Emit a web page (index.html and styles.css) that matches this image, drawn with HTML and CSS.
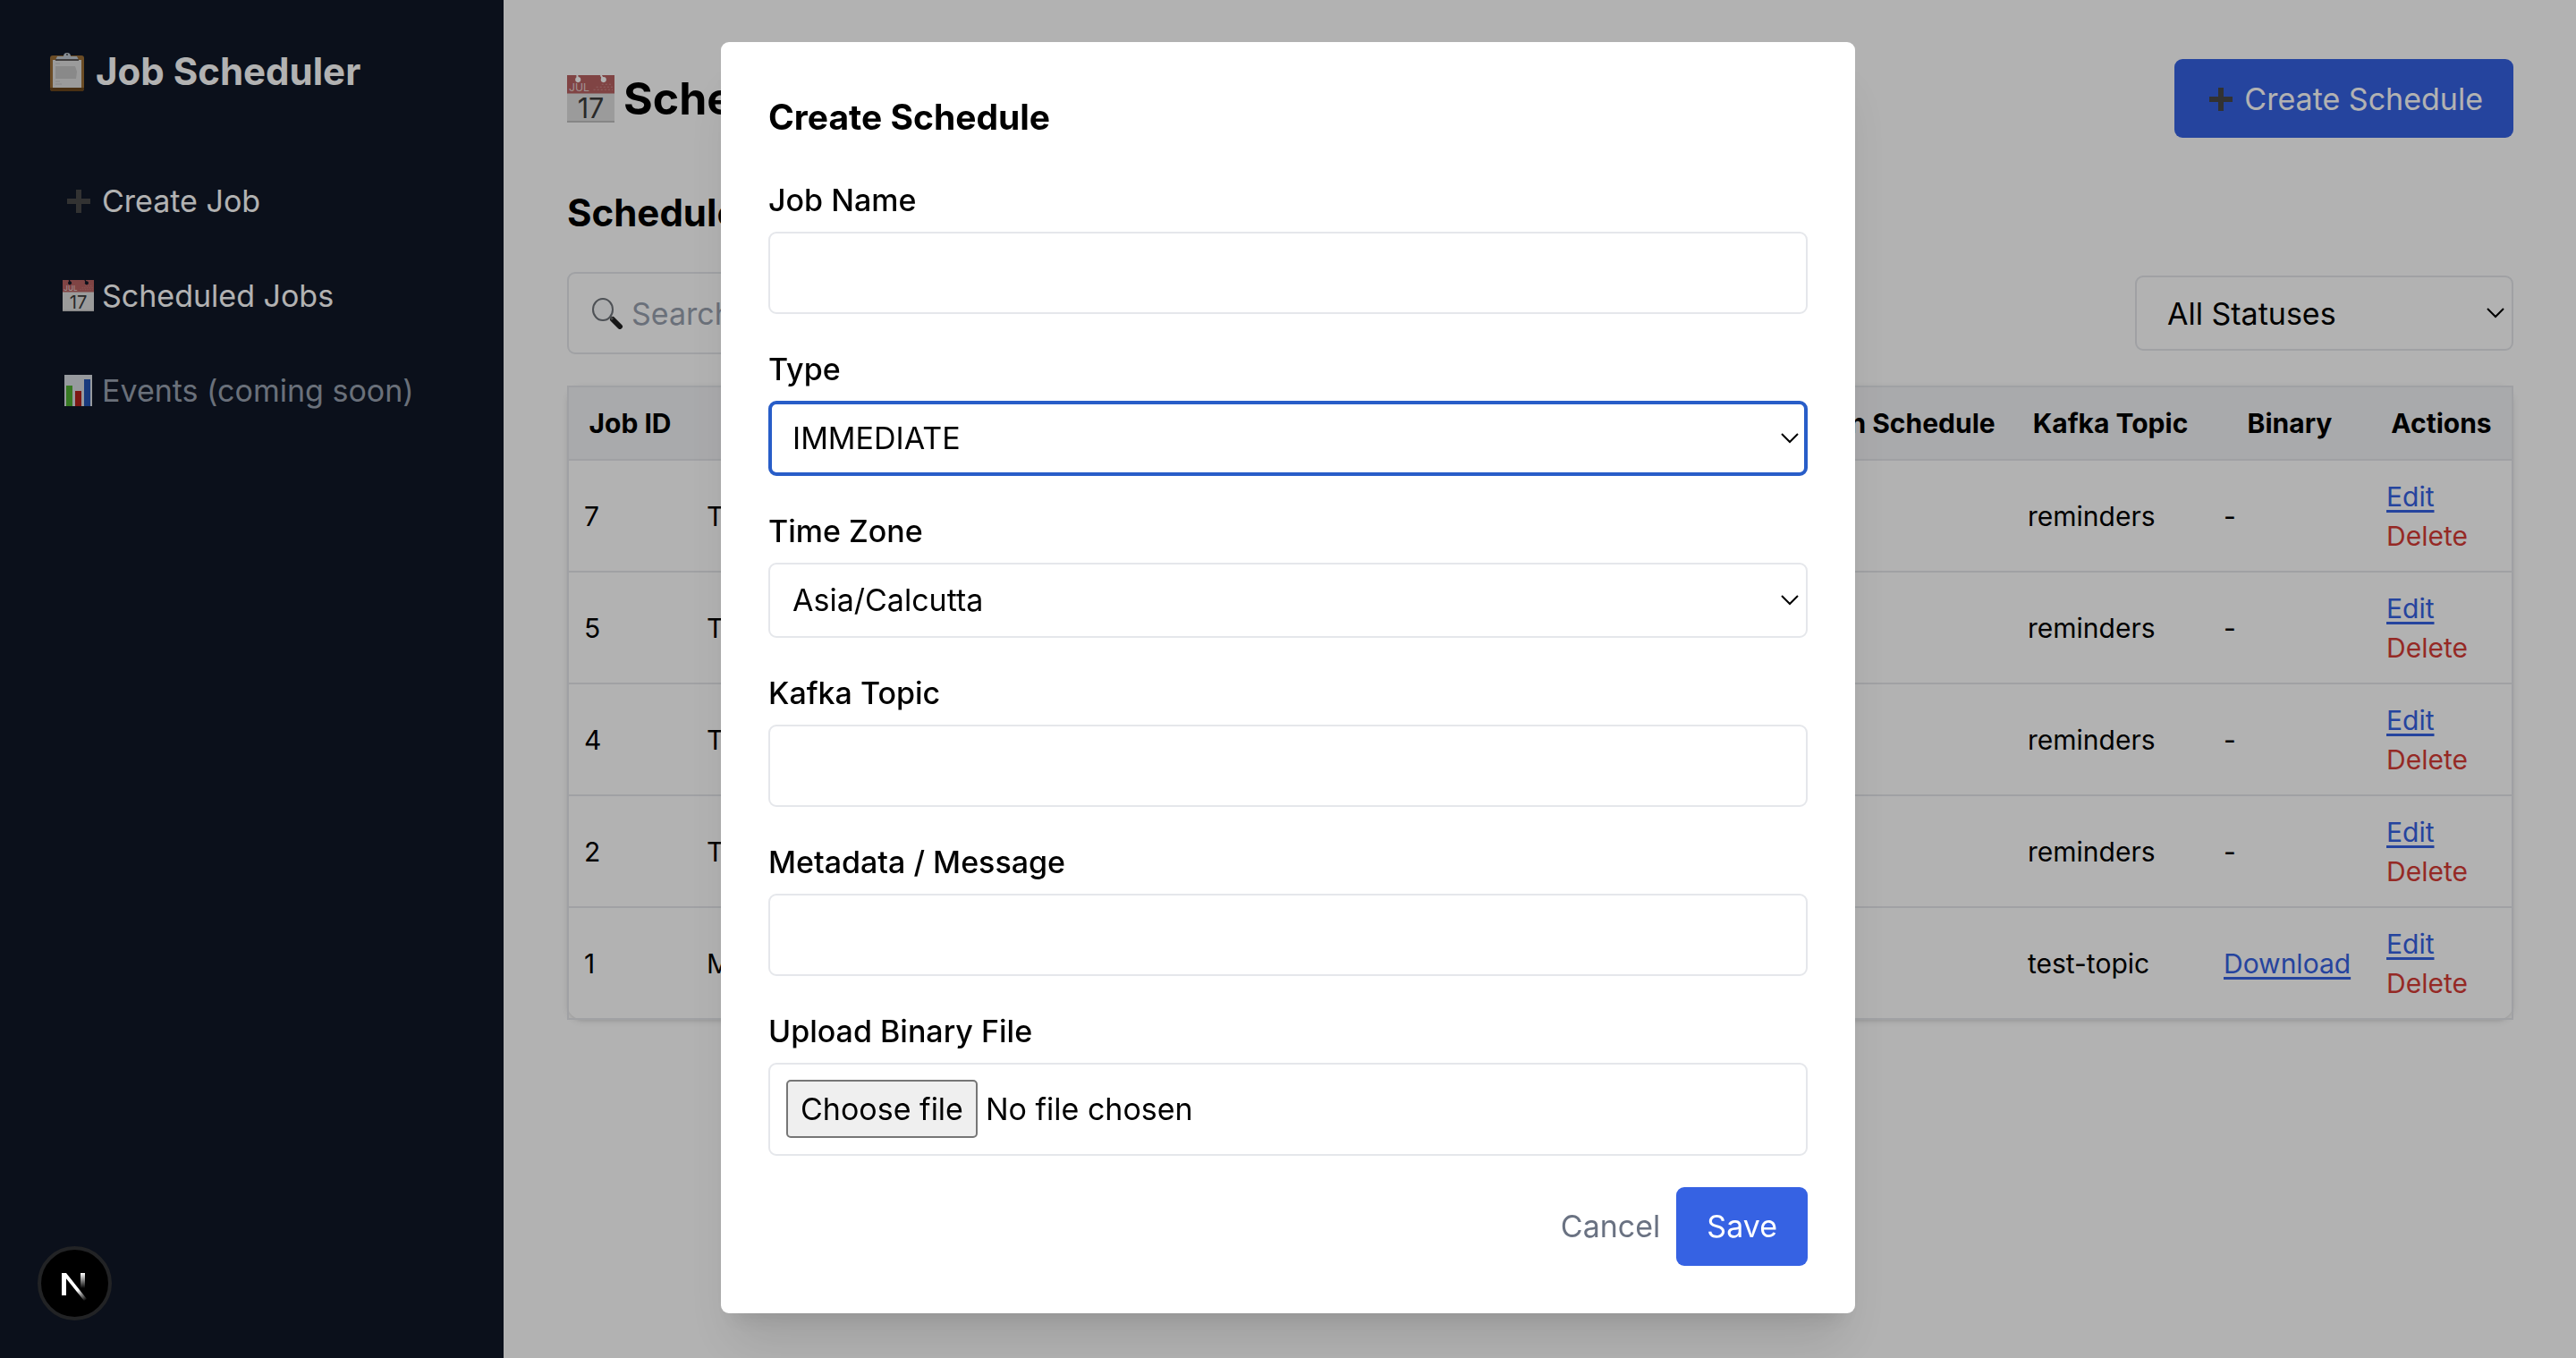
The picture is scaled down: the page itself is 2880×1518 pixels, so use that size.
FILE: index.html
```html
<!DOCTYPE html>
<html lang="en">
<head>
<meta charset="utf-8">
<title>Job Scheduler</title>
<link rel="stylesheet" href="styles.css">
</head>
<body>
<svg class="defs" aria-hidden="true">
  <symbol id="plus" viewBox="0 0 35 35">
    <path d="M18 5v26M5 18h26" stroke="#484848" stroke-width="6" fill="none"/>
  </symbol>
  <symbol id="chevron" viewBox="0 0 20 12">
    <path d="M1 1l9 9 9-9" fill="none" stroke="currentColor" stroke-width="2"/>
  </symbol>
</svg>

<div class="app">
  <aside class="sidebar">
    <h2 class="brand">
      <svg class="brand-icon" viewBox="0 0 44 44" aria-hidden="true">
        <rect x="3" y="4" width="38" height="40" rx="3" fill="#9a6d35"/>
        <path d="M3 40h38v1a3 3 0 0 1-3 3H6a3 3 0 0 1-3-3z" fill="#69451c"/>
        <path d="M6 9h32v31H6z" fill="#dedede"/>
        <path d="M9 16h22l2 6-1 8H9z" fill="#c4c4c4"/>
        <path d="M9 13h5M9 33h5M9 36h7" stroke="#c4c4c4"/>
        <path d="M9 9l2-4h7a4 4 0 1 1 8 0h7l2 4z" fill="#c2cad4"/>
        <path d="M9 9h26" stroke="#5e5a5a" stroke-width="2"/>
        <circle cx="22" cy="3" r="1" fill="#444"/>
      </svg>
      Job Scheduler
    </h2>
    <nav class="nav">
      <a class="nav-item" href="#create"><svg class="icon"><use href="#plus"/></svg>Create Job</a>
      <a class="nav-item" href="#jobs">
        <svg class="icon calendar" viewBox="0 0 52 52" aria-hidden="true">
          <path d="M0 0h52v52H0z" fill="#dedede"/>
          <path d="M0 0h52v20H0z" fill="#b86262"/>
          <circle class="hole" cx="12" cy="5" r="3"/>
          <circle class="hole" cx="40" cy="5" r="3"/>
          <path class="ring" d="M11 0l1 5M37 0l3 5"/>
          <text x="2" y="18" font-size="12" fill="#e6d4d4">JUL</text>
          <path d="M29 16h21M32 13h18M38 10h12" stroke="#cc8c8c" stroke-dasharray="2 2"/>
          <text x="26" y="47" font-size="30" text-anchor="middle" fill="#3c3c3c">17</text>
          <path d="M0 51h52" stroke="#c0c0c0" stroke-width="2"/>
        </svg>
        Scheduled Jobs
      </a>
      <span class="nav-item nav-item-disabled">
        <svg class="icon" viewBox="0 0 35 35" aria-hidden="true">
          <path d="M2 0h31v35H2z" fill="#d8dde2"/>
          <path d="M4 12h7v23H4z" fill="#4fae32"/>
          <path d="M14 18h7v17h-7z" fill="#b3221c"/>
          <path d="M24 5h7v30h-7z" fill="#2453b4"/>
        </svg>
        Events (coming soon)
      </span>
    </nav>
  </aside>

  <main class="main">
    <header class="page-header">
      <h1 class="page-title">
        <svg class="title-icon calendar" viewBox="0 0 52 52" aria-hidden="true">
          <path d="M0 0h52v52H0z" fill="#dedede"/>
          <path d="M0 0h52v20H0z" fill="#b86262"/>
          <circle class="hole" cx="12" cy="5" r="3"/>
          <circle class="hole" cx="40" cy="5" r="3"/>
          <path class="ring" d="M11 0l1 5M37 0l3 5"/>
          <text x="2" y="18" font-size="12" fill="#e6d4d4">JUL</text>
          <path d="M29 16h21M32 13h18M38 10h12" stroke="#cc8c8c" stroke-dasharray="2 2"/>
          <text x="26" y="47" font-size="30" text-anchor="middle" fill="#3c3c3c">17</text>
          <path d="M0 51h52" stroke="#c0c0c0" stroke-width="2"/>
        </svg>
        Scheduled Jobs
      </h1>
      <button class="button" type="button"><svg class="icon"><use href="#plus"/></svg>Create Schedule</button>
    </header>
    <h2 class="section-title">Scheduled Jobs</h2>
    <div class="filters">
      <label class="search">
        <svg class="icon" viewBox="0 0 35 35" aria-hidden="true">
          <path d="M23 24l8 8" stroke="#222" stroke-width="6" stroke-linecap="round"/>
          <path d="M19 20l4 4" stroke="#666" stroke-width="3"/>
          <ellipse cx="12" cy="13" rx="11" ry="12" fill="#f8fafb" stroke="#70757b" stroke-width="2"/>
        </svg>
        <input class="search-input" type="search" placeholder="Search" aria-label="Search">
      </label>
      <div class="select-wrap status">
        <select class="control select" aria-label="Status"><option>All Statuses</option></select>
        <svg class="chevron"><use href="#chevron"/></svg>
      </div>
    </div>
    <table class="jobs">
      <colgroup><col class="col-id"><col><col class="col-cron"><col class="col-topic"><col class="col-binary"><col class="col-actions"></colgroup>
      <thead>
        <tr><th>Job ID</th><th>Name</th><th>Cron Schedule</th><th>Kafka Topic</th><th>Binary</th><th>Actions</th></tr>
      </thead>
      <tbody>
        <tr><td>7</td><td>Test</td><td></td><td>reminders</td><td>-</td><td><a class="link" href="#edit">Edit</a><button class="delete" type="button">Delete</button></td></tr>
        <tr><td>5</td><td>Test</td><td></td><td>reminders</td><td>-</td><td><a class="link" href="#edit">Edit</a><button class="delete" type="button">Delete</button></td></tr>
        <tr><td>4</td><td>Test</td><td></td><td>reminders</td><td>-</td><td><a class="link" href="#edit">Edit</a><button class="delete" type="button">Delete</button></td></tr>
        <tr><td>2</td><td>Test</td><td></td><td>reminders</td><td>-</td><td><a class="link" href="#edit">Edit</a><button class="delete" type="button">Delete</button></td></tr>
        <tr><td>1</td><td>Message</td><td></td><td>test-topic</td><td><a class="link" href="#download">Download</a></td><td><a class="link" href="#edit">Edit</a><button class="delete" type="button">Delete</button></td></tr>
      </tbody>
    </table>
  </main>
</div>

<div class="overlay">
  <form class="modal" role="dialog" aria-labelledby="modal-title">
    <h2 class="modal-title" id="modal-title">Create Schedule</h2>
    <div class="field">
      <label for="job-name">Job Name</label>
      <input class="control" id="job-name" type="text">
    </div>
    <div class="field">
      <label for="type">Type</label>
      <div class="select-wrap">
        <select class="control select select-active" id="type"><option>IMMEDIATE</option></select>
        <svg class="chevron"><use href="#chevron"/></svg>
      </div>
    </div>
    <div class="field">
      <label for="zone">Time Zone</label>
      <div class="select-wrap">
        <select class="control select" id="zone"><option>Asia/Calcutta</option></select>
        <svg class="chevron"><use href="#chevron"/></svg>
      </div>
    </div>
    <div class="field">
      <label for="topic">Kafka Topic</label>
      <input class="control" id="topic" type="text">
    </div>
    <div class="field">
      <label for="metadata">Metadata / Message</label>
      <input class="control" id="metadata" type="text">
    </div>
    <div class="field">
      <label for="file">Upload Binary File</label>
      <div class="file">
        <span class="file-button">Choose file</span>
        <span>No file chosen</span>
        <input class="file-input" id="file" type="file">
      </div>
    </div>
    <div class="actions">
      <button class="cancel" type="button">Cancel</button>
      <button class="button" type="submit">Save</button>
    </div>
  </form>
</div>

<button class="badge" type="button" aria-label="Developer tools">
  <svg class="badge-logo" viewBox="0 0 75 75" aria-hidden="true">
    <defs>
      <linearGradient id="fade-diagonal" gradientUnits="userSpaceOnUse" x1="42" y1="44" x2="51" y2="56"><stop stop-color="#fff"/><stop offset="1" stop-color="#fff" stop-opacity="0"/></linearGradient>
      <linearGradient id="fade-bar" gradientUnits="userSpaceOnUse" x1="46" y1="26" x2="46" y2="43"><stop stop-color="#fff"/><stop offset="1" stop-color="#fff" stop-opacity="0"/></linearGradient>
    </defs>
    <path d="M23 26h5v25h-5z" fill="#fff"/>
    <path d="M23 26h5l23 29-3 2z" fill="url(#fade-diagonal)"/>
    <path d="M44 26h5v17h-5z" fill="url(#fade-bar)"/>
  </svg>
</button>
</body>
</html>
```
FILE: styles.css
```css
:root {
  --blue: #3662e3;
  --line: #e5e7eb;
  --hole: #fff;
}

* {
  box-sizing: border-box;
}

body {
  margin: 0;
  background: #fff;
  color: #000;
  font: 34px/53px Inter, "Liberation Sans", sans-serif;
}

h1,
h2 {
  margin: 0;
}

button,
input,
select {
  font: inherit;
  color: inherit;
}

.defs {
  position: absolute;
  width: 0;
  height: 0;
}

.app {
  display: flex;
  min-height: 100vh;
}

.calendar {
  overflow: visible;
  font-weight: 400;
  line-height: 1;
}

.hole {
  fill: var(--hole);
}

.ring {
  fill: none;
  stroke: var(--hole);
  stroke-width: 2;
}

.icon {
  flex: none;
  width: 35px;
  height: 35px;
}

/* Sidebar */

.sidebar {
  --hole: #101828;
  flex: none;
  width: 563px;
  padding: 49px 36px;
  background: #101828;
  color: #fff;
}

.brand {
  display: flex;
  align-items: center;
  gap: 10px;
  padding-left: 17px;
  font-size: 42px;
  font-weight: 700;
  line-height: 62px;
}

.brand-icon {
  width: 44px;
  height: 44px;
}

.nav {
  display: flex;
  flex-direction: column;
  gap: 18px;
  margin-top: 69px;
}

.nav-item {
  display: flex;
  align-items: center;
  gap: 9px;
  height: 88px;
  padding: 0 34px;
  color: inherit;
  text-decoration: none;
  white-space: nowrap;
}

.nav-item-disabled {
  color: #99a1af;
}

/* Page */

.main {
  flex: 1;
  min-width: 0;
  padding: 66px 70px 70px 71px;
}

.page-header {
  display: flex;
  align-items: center;
  justify-content: space-between;
}

.page-title {
  display: flex;
  align-items: center;
  gap: 10px;
  font-size: 50px;
  font-weight: 700;
}

.title-icon {
  width: 53px;
  height: 53px;
}

.button {
  display: flex;
  align-items: center;
  gap: 9px;
  height: 88px;
  padding: 0 34px;
  border: 0;
  border-radius: 9px;
  background: var(--blue);
  color: #fff;
}

.section-title {
  margin: 53px 0 35px;
  font-size: 42px;
  font-weight: 700;
  line-height: 62px;
}

.filters {
  display: flex;
  align-items: center;
  justify-content: space-between;
  margin-bottom: 35px;
}

.search {
  display: flex;
  align-items: center;
  gap: 9px;
  width: 700px;
  height: 92px;
  padding: 0 26px;
  border: 2px solid var(--line);
  border-radius: 9px;
}

.search-input {
  flex: 1;
  padding: 0;
  border: 0;
  outline: 0;
  background: none;
}

.search-input::placeholder {
  color: #99a1af;
}

.status {
  width: 423px;
}

.status .select {
  padding-left: 34px;
}

.jobs {
  width: 100%;
  table-layout: fixed;
  border: 2px solid var(--line);
  border-collapse: collapse;
  border-radius: 18px;
  box-shadow: 0 2px 7px rgb(0 0 0 / 10%), 0 2px 4px -2px rgb(0 0 0 / 10%);
  font-size: 30px;
  line-height: 44px;
}

.col-id {
  width: 138px;
}

.col-cron {
  width: 254px;
}

.col-topic {
  width: 219px;
}

.col-binary {
  width: 182px;
}

.col-actions {
  width: 158px;
}

.jobs th {
  padding: 18px 0;
  background: #f3f4f6;
  font-weight: 700;
  white-space: nowrap;
}

.jobs td {
  padding: 18px 17px 17px;
  border-top: 2px solid var(--line);
}

.link {
  color: var(--blue);
  text-underline-offset: 4px;
}

.delete {
  display: block;
  padding: 0;
  border: 0;
  background: none;
  color: #d63c36;
}

/* Dialog */

.overlay {
  position: fixed;
  inset: 0;
  display: flex;
  align-items: center;
  justify-content: center;
  padding-bottom: 4px;
  background: rgb(0 0 0 / 30%);
}

.modal {
  display: flex;
  flex-direction: column;
  gap: 35px;
  width: 1268px;
  padding: 53px;
  border-radius: 9px;
  background: #fff;
  box-shadow: 0 44px 55px -11px rgb(0 0 0 / 10%), 0 18px 22px -13px rgb(0 0 0 / 10%);
}

.modal-title {
  font-size: 39px;
  font-weight: 700;
  line-height: 62px;
}

.field {
  display: flex;
  flex-direction: column;
  gap: 9px;
  font-weight: 500;
}

.control {
  width: 100%;
  height: 92px;
  padding: 0 25px;
  border: 2px solid var(--line);
  border-radius: 9px;
  background: #fff;
  font-weight: 400;
}

.select-wrap {
  position: relative;
}

.select {
  display: block;
  height: 84px;
  appearance: none;
}

.select-active {
  padding: 0 23px;
  border: 4px solid #285dc8;
}

.chevron {
  position: absolute;
  top: 36px;
  right: 10px;
  width: 20px;
  height: 12px;
  pointer-events: none;
}

.file {
  position: relative;
  display: flex;
  align-items: center;
  gap: 9px;
  height: 104px;
  padding: 0 18px;
  border: 2px solid var(--line);
  border-radius: 9px;
  font-weight: 400;
}

.file-button {
  padding: 4px 14px;
  border: 2px solid #767676;
  border-radius: 5px;
  background: #efefef;
}

.file-input {
  position: absolute;
  inset: 0;
  width: 100%;
  opacity: 0;
}

.actions {
  display: flex;
  align-items: center;
  justify-content: flex-end;
  gap: 18px;
}

.cancel {
  padding: 0;
  border: 0;
  background: none;
  color: #6a7282;
}

.badge {
  position: fixed;
  bottom: 42px;
  left: 42px;
  width: 83px;
  height: 83px;
  padding: 0;
  border: 4px solid #222325;
  border-radius: 50%;
  background: #000;
}

.badge-logo {
  display: block;
  width: 75px;
  height: 75px;
}
```
